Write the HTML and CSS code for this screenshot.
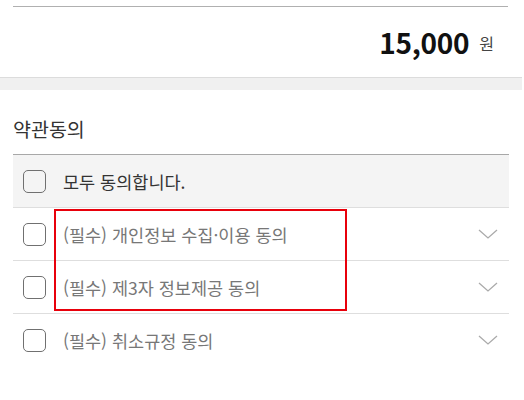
FILE: index.html
```html
<!DOCTYPE html>
<html lang="ko">
<head>
    <meta charset="UTF-8">
    <meta name="viewport" content="width=device-width, initial-scale=1.0">
    <title>약관동의</title>
    <link rel="stylesheet" href="styles.css">
</head>
<body>
    <div class="page">
        <!-- 결제 금액 -->
        <div class="price-box">
            <span class="price">15,000</span>
            <span class="won">원</span>
        </div>

        <div class="gap-band"></div>

        <!-- 약관 동의 -->
        <div class="terms">
            <h3 class="terms-title">약관동의</h3>
            <ul class="terms-list">
                <li class="term-row all">
                    <span class="check"></span>
                    <span class="term-text">모두 동의합니다.</span>
                </li>
                <li class="term-row">
                    <span class="check"></span>
                    <span class="term-text">(필수) 개인정보 수집·이용 동의</span>
                    <svg class="arrow" width="20" height="10" viewBox="0 0 20 10"><path d="M1 1 L10 9 L19 1" fill="none" stroke="#aaa" stroke-width="1.3"/></svg>
                </li>
                <li class="term-row">
                    <span class="check"></span>
                    <span class="term-text">(필수) 제3자 정보제공 동의</span>
                    <svg class="arrow" width="20" height="10" viewBox="0 0 20 10"><path d="M1 1 L10 9 L19 1" fill="none" stroke="#aaa" stroke-width="1.3"/></svg>
                </li>
                <li class="term-row last">
                    <span class="check"></span>
                    <span class="term-text">(필수) 취소규정 동의</span>
                    <svg class="arrow" width="20" height="10" viewBox="0 0 20 10"><path d="M1 1 L10 9 L19 1" fill="none" stroke="#aaa" stroke-width="1.3"/></svg>
                </li>
            </ul>
            <!-- 강조 표시 -->
            <div class="highlight"></div>
        </div>
    </div>
</body>
</html>
```

FILE: styles.css
```css
body {
    margin: 0;
    font-family: "Noto Sans CJK KR", "Noto Sans", sans-serif;
    background-color: #ffffff;
    color: #333;
}
.page {
    width: 522px;
}
.price-box {
    margin: 6px 14px 0 13px;
    border-top: 1px solid #b0b0b0;
    height: 70px;
    display: flex;
    justify-content: flex-end;
    align-items: center;
    padding-right: 14px;
}
.price {
    font-size: 28px;
    font-weight: bold;
    color: #111;
    letter-spacing: -0.3px;
}
.won {
    font-size: 16px;
    color: #444;
    margin-left: 10px;
    margin-top: 2px;
}
.gap-band {
    height: 12px;
    background-color: #f0f0f0;
    border-top: 1px solid #dcdcdc;
}
.terms {
    position: relative;
    margin: 0 13px;
    padding-top: 25px;
}
.terms-title {
    margin: 0;
    font-size: 19.5px;
    font-weight: normal;
    color: #333;
    padding-bottom: 11px;
    border-bottom: 1px solid #a8a8a8;
    line-height: 28px;
}
.terms-list {
    list-style: none;
    margin: 0;
    padding: 0;
}
.term-row {
    display: flex;
    align-items: center;
    height: 52px;
    border-bottom: 1px solid #dedede;
    padding: 0 11px 0 10px;
}
.term-row.all {
    background-color: #f4f4f4;
}
.term-row.last {
    border-bottom: none;
}
.check {
    width: 21px;
    height: 21px;
    border: 1.5px solid #707070;
    border-radius: 5px;
    flex-shrink: 0;
    margin-right: 17px;
}
.term-text {
    flex: 1;
    font-size: 17.5px;
    color: #777;
}
.all .term-text {
    color: #333;
}
.arrow {
    flex-shrink: 0;
}
.highlight {
    position: absolute;
    left: 41px;
    top: 119px;
    width: 289px;
    height: 98px;
    border: 2px solid #e8000b;
}
```
